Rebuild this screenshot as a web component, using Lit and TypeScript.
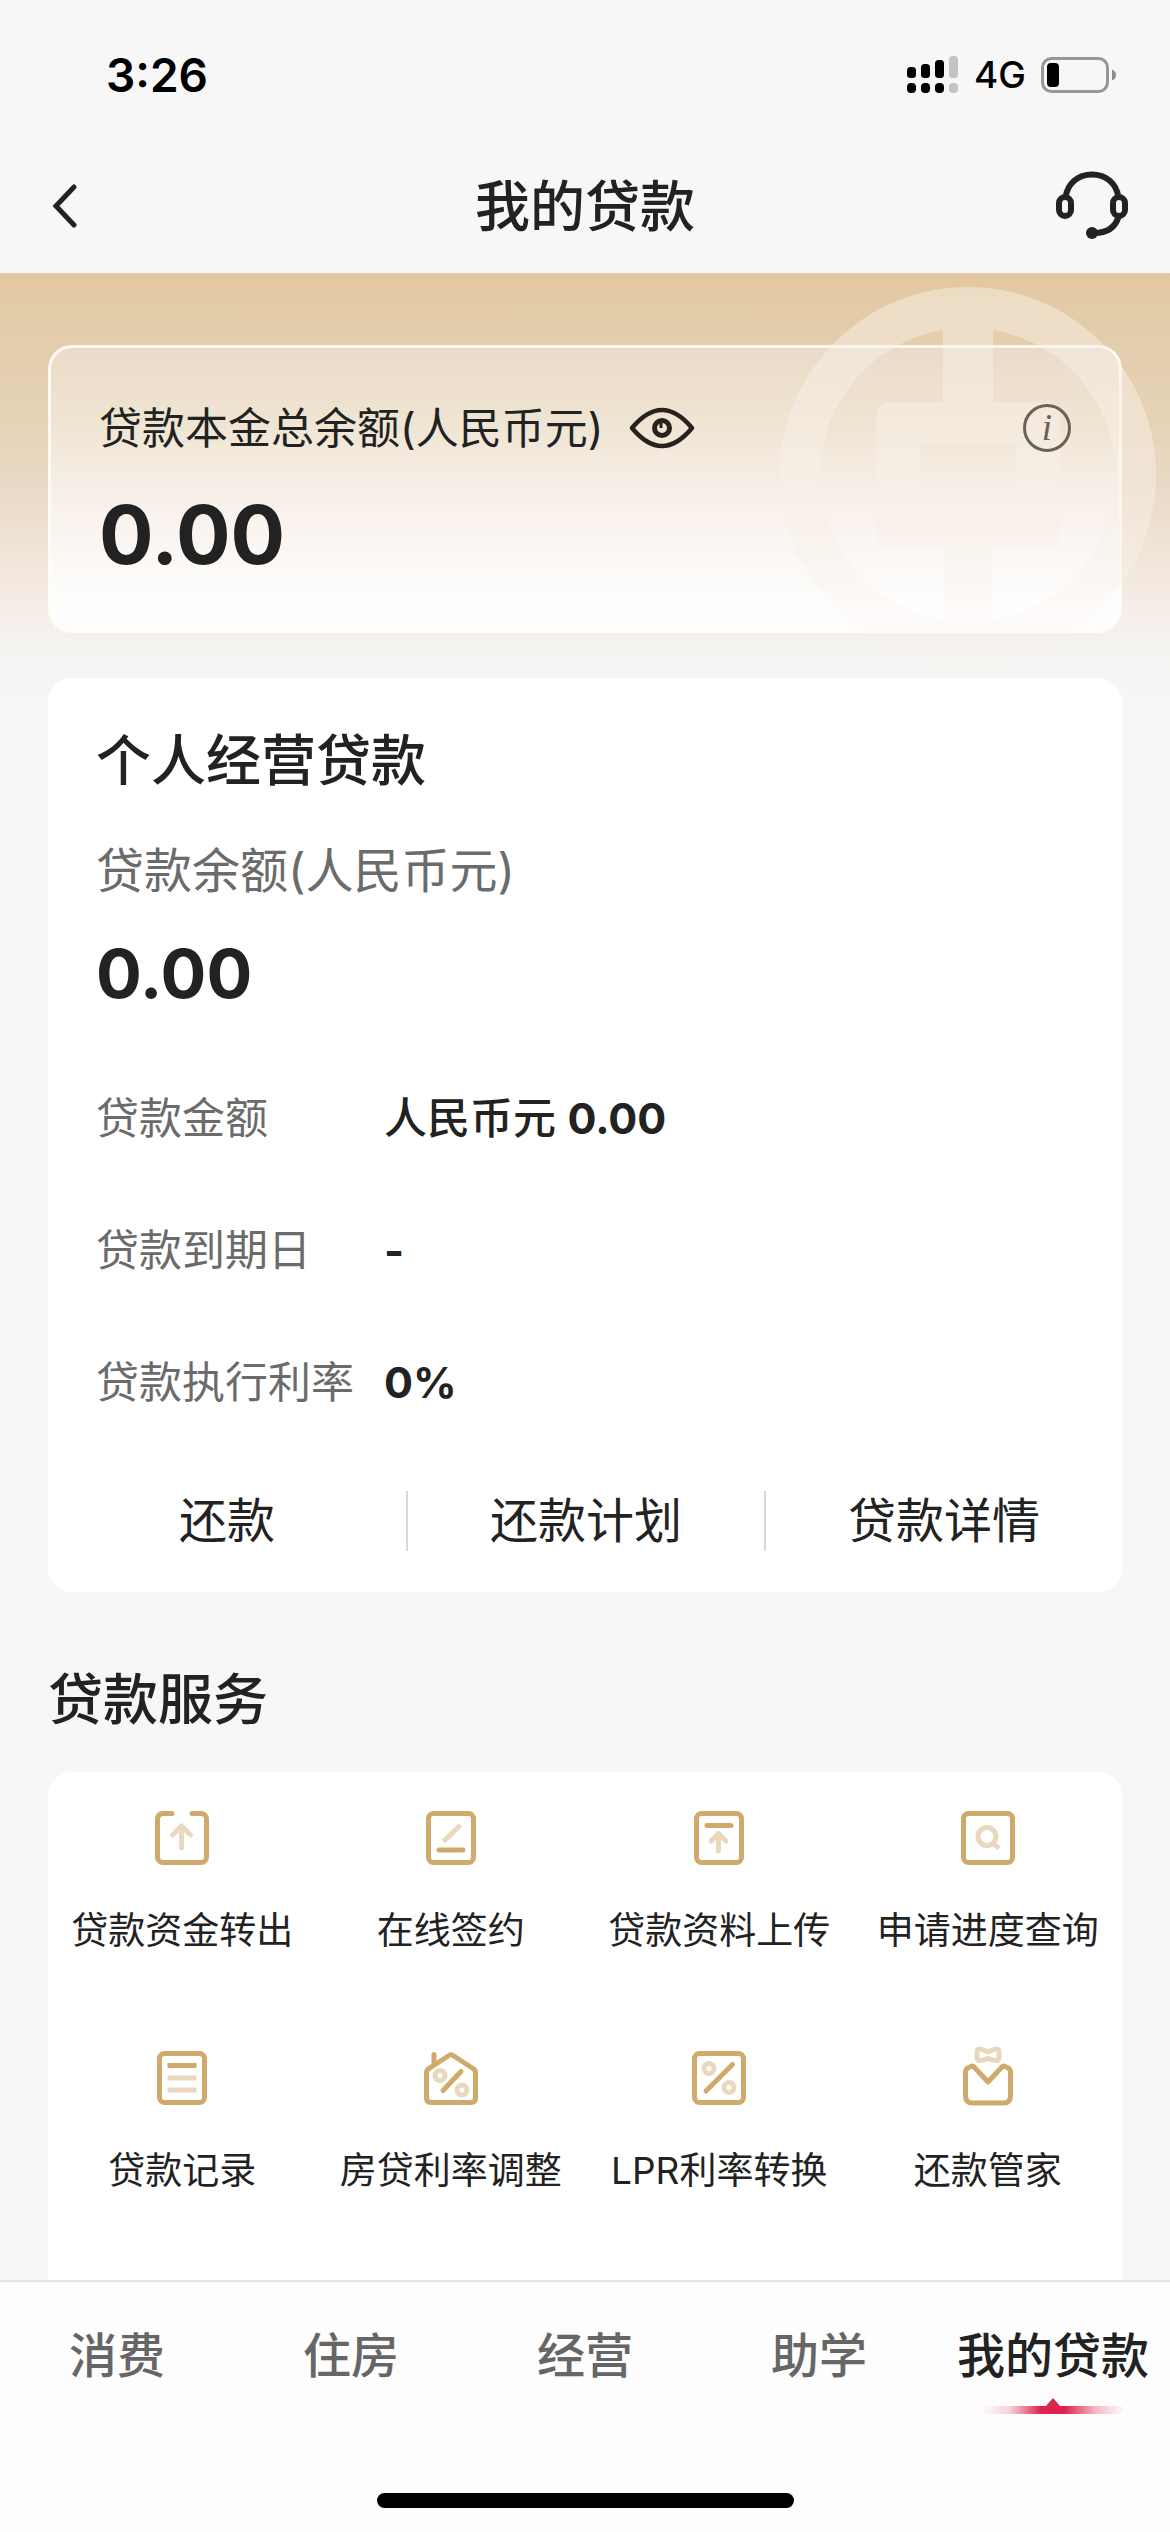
import { LitElement, html, css, svg, type TemplateResult } from "lit";
import { customElement, property, state } from "lit/decorators.js";
import { classMap } from "lit/directives/class-map.js";

const frame = (wide: boolean) =>
  wide
    ? svg`<rect class="dark" x="5.5" y="5.5" width="49" height="49" rx="5"/>`
    : svg`<rect class="dark" x="7.5" y="5.5" width="45" height="49" rx="5"/>`;

const glyphs: Record<string, TemplateResult> = {
  transfer: svg`
    <path class="dark" d="M20 5.5H11A5.5 5.5 0 0 0 5.5 11V49A5.5 5.5 0 0 0 11 54.5H49A5.5 5.5 0 0 0 54.5 49V11A5.5 5.5 0 0 0 49 5.5H40"/>
    <path class="light" d="M29.500 40V18M20.500 27L29.500 18L38.500 27"/>`,
  sign: svg`${frame(false)}
    <path class="dark" d="M18 42H42"/>
    <path class="light butt" d="M22.500 33.500L39.500 17"/>`,
  upload: svg`${frame(false)}
    <path class="dark" d="M18 17.500H42"/>
    <path class="light" d="M29.500 43V25.500M22 33L29.500 25.500L37 33"/>`,
  search: svg`${frame(true)}
    <circle class="light" cx="29" cy="28.500" r="9"/>
    <path class="light butt" d="M34 34L41 40.500"/>`,
  record: svg`${frame(false)}
    <path class="dark butt" d="M15.500 17.500H44.500"/>
    <path class="light butt" d="M15.500 30H44.500M15.500 42H44.500"/>`,
  house: svg`
    <path class="dark" d="M5.500 24.500Q5.500 22 8 20.500L28 7.500Q30 6 32 7.500L52 20.500Q54.500 22 54.500 24.500V50Q54.500 54.500 50 54.500H10Q5.500 54.500 5.500 50ZM13 16V6.500"/>
    <path class="dark" d="M40 23.500L22 42.500"/>
    <circle class="light" cx="19" cy="27.500" r="5"/>
    <circle class="light" cx="41" cy="42" r="5"/>`,
  percent: svg`${frame(true)}
    <path class="dark" d="M43.500 16.500L17 43"/>
    <circle class="light" cx="20" cy="20.500" r="5"/>
    <circle class="light" cx="40" cy="39.500" r="5"/>`,
  butler: svg`
    <path class="dark" d="M7.500 24Q7.500 21 10.500 19.500L13 18.500Q15 17.500 16.500 19.500L30 34L43.500 19.500Q45 17.500 47 18.500L49.500 19.500Q52.500 21 52.500 24V48Q52.500 55 45.500 55H14.500Q7.500 55 7.500 48Z"/>
    <path class="light" d="M30 4C26 2 23 0.500 20.500 1Q19 1.500 19 5V9Q19 12 21 12.500C23.500 13 26 12 30 10.500C34 12 36.500 13 39 12.500Q41 12 41 9V5Q41 1.500 39.500 1C37 0.500 34 2 30 4Z"/>`,
};

@customElement("service-item")
class ServiceItem extends LitElement {
  @property() label = "";
  @property() icon = "";

  static styles = css`
    :host { display: block; }
    .item {
      display: flex; flex-direction: column; align-items: center; gap: 39px;
      width: 100%; padding: 0; border: 0; background: none; color: #222;
      font: inherit; font-size: 37px; line-height: 48px; white-space: nowrap; cursor: pointer;
    }
    .icon { width: 60px; height: 60px; fill: none; overflow: visible; }
    .dark { stroke: #d0aa6c; stroke-width: 5; stroke-linecap: round; stroke-linejoin: round; }
    .light { stroke: #e9d8bd; stroke-width: 5; stroke-linecap: round; stroke-linejoin: round; }
    .butt { stroke-linecap: butt; }
  `;

  render() {
    return html`
      <button class="item" type="button">
        <svg class="icon" viewBox="0 0 60 60" aria-hidden="true">${glyphs[this.icon]}</svg>
        <span>${this.label}</span>
      </button>`;
  }
}

const details = [
  { name: "贷款金额", value: "人民币元 0.00" },
  { name: "贷款到期日", value: "-" },
  { name: "贷款执行利率", value: "0%" },
];

const actions = ["还款", "还款计划", "贷款详情"];

const services = [
  { label: "贷款资金转出", icon: "transfer" },
  { label: "在线签约", icon: "sign" },
  { label: "贷款资料上传", icon: "upload" },
  { label: "申请进度查询", icon: "search" },
  { label: "贷款记录", icon: "record" },
  { label: "房贷利率调整", icon: "house" },
  { label: "LPR利率转换", icon: "percent" },
  { label: "还款管家", icon: "butler" },
];

const tabs = ["消费", "住房", "经营", "助学", "我的贷款"];

@customElement("app-root")
class AppRoot extends LitElement {
  @state() private concealed = false;
  @state() private tab = "我的贷款";

  static styles = css`
    :host {
      display: flex; flex-direction: column; min-height: 100vh;
      background: #f7f7f7; color: #222;
      font-family: Inter, "Noto Sans CJK SC", sans-serif;
    }
    * { box-sizing: border-box; }
    button { padding: 0; border: 0; background: none; color: inherit; font: inherit; cursor: pointer; }
    h1, h2, p, dl, dd { margin: 0; }
    svg { display: block; }

    .status {
      display: flex; align-items: center; justify-content: space-between;
      height: 138px; padding: 12px 53px 0 106px; color: #000;
    }
    .time { font-size: 46px; line-height: 56px; font-weight: 600; }
    .signals { display: flex; align-items: center; gap: 15px; }
    .network { font-size: 37px; line-height: 48px; font-weight: 500; }

    .titlebar {
      display: grid; grid-template-columns: 72px 1fr 72px; align-items: center;
      height: 135px; padding: 0 42px;
    }
    .back { display: flex; align-items: center; height: 72px; padding-left: 10px; }
    .title { font-size: 55px; line-height: 72px; font-weight: 500; text-align: center; }

    .content {
      position: relative; flex: 1; display: flex; flex-direction: column;
      padding: 72px 48px 0;
      background: linear-gradient(#e2c8a0, #e3ceae 80px, #e5d3b4 140px, #ead9c6 215px, #f0e5d8 280px, #f5ece6 330px, #f5f3f0 370px, #f7f7f7 440px) 0 0 / 100% 440px no-repeat;
    }
    .watermark { position: absolute; top: 14px; right: 14px; width: 376px; height: 376px; pointer-events: none; }

    .total {
      position: relative; display: flex; flex-direction: column; gap: 35px;
      padding: 52px 48px 51px; border: 3px solid rgba(255, 253, 245, 0.9); border-radius: 24px;
      background: linear-gradient(rgba(240, 230, 222, 0.55), rgba(246, 240, 230, 0.6) 80px, rgba(251, 245, 242, 0.8) 160px, rgba(253, 252, 251, 0.86) 220px, rgba(255, 255, 255, 0.94) 260px);
      background-origin: border-box;
    }
    .total-head { position: relative; z-index: 1; display: flex; align-items: center; gap: 26px; }
    .total-label { font-size: 43px; line-height: 56px; }
    .info {
      display: flex; align-items: center; justify-content: center;
      width: 48px; height: 48px; margin-left: auto;
      border: 3px solid #6b6057; border-radius: 50%; color: #6b6057;
      font-family: "Liberation Serif", serif; font-style: italic; font-size: 37px; line-height: 40px;
    }
    .total-value { font-size: 81px; line-height: 88px; font-weight: 700; }

    .loan { position: relative; z-index: 1; margin-top: 45px; border-radius: 24px; background: #fff; padding: 46px 0 41px; }
    .loan-body { padding: 0 48px; }
    .heading { font-size: 55px; line-height: 72px; font-weight: 500; }
    .loan-label { margin-top: 43px; font-size: 48px; line-height: 64px; color: #6b6b6b; }
    .loan-value { margin-top: 30px; font-size: 68px; line-height: 80px; font-weight: 700; }
    .details {
      display: grid; grid-template-columns: max-content 1fr; gap: 76px 30px;
      margin-top: 77px; font-size: 43px; line-height: 56px;
    }
    .details dt { color: #6b6b6b; }
    .details dd { font-weight: 700; }
    .details .cjk { font-weight: 500; }
    .actions { display: grid; grid-template-columns: repeat(3, 1fr); margin-top: 81px; }
    .action { height: 60px; font-size: 48px; line-height: 60px; }
    .action + .action { border-left: 2px solid #d8d8d8; }

    .services-title { margin-top: 71px; }
    .services {
      flex: 1; display: grid; grid-template-columns: repeat(4, 1fr); align-content: start; row-gap: 93px;
      margin-top: 37px; padding: 36px 0 80px; border-radius: 24px 24px 0 0; background: #fff;
    }

    .tabbar { border-top: 2px solid #e6e6e6; background: #fdfdfd; padding-bottom: 24px; }
    .tabs { display: grid; grid-template-columns: repeat(5, 1fr); padding-top: 42px; }
    .tab {
      display: flex; flex-direction: column; align-items: center; gap: 10px; height: 90px;
      font-size: 48px; line-height: 64px; font-weight: 500; color: #666; white-space: nowrap;
    }
    .tab.active { color: #222; }
    .home { width: 36%; max-width: 417px; height: 15px; margin: 79px auto 0; border-radius: 8px; background: #000; }
  `;

  private renderStatus() {
    return html`
      <div class="status">
        <span class="time">3:26</span>
        <div class="signals">
          <svg width="52" height="38" viewBox="0 0 52 38" aria-hidden="true">
            <rect x="0" y="11" width="9" height="11" rx="3.500"/>
            <rect x="14" y="8" width="9" height="14" rx="3.500"/>
            <rect x="28" y="4" width="9" height="18" rx="3.500"/>
            <rect x="42" y="0" width="9" height="22" rx="3.500" fill="#c4c4c4"/>
            <rect x="0" y="27" width="9" height="10" rx="4"/>
            <rect x="14" y="27" width="9" height="10" rx="4"/>
            <rect x="28" y="27" width="9" height="10" rx="4"/>
            <rect x="42" y="27" width="9" height="10" rx="4" fill="#c4c4c4"/>
          </svg>
          <span class="network">4G</span>
          <svg width="76" height="36" viewBox="0 0 76 36" aria-hidden="true">
            <rect x="1.500" y="1.500" width="65" height="33" rx="9" fill="none" stroke="#979797" stroke-width="3"/>
            <rect x="6" y="6" width="12" height="24" rx="4"/>
            <path d="M71 12.500Q75 14 75 18Q75 22 71 23.500Z" fill="#8c8c8c"/>
          </svg>
        </div>
      </div>`;
  }

  private renderWatermark() {
    return html`
      <svg class="watermark" viewBox="0 0 376 376" aria-hidden="true">
        <defs>
          <linearGradient id="fade" x1="0" y1="0" x2="0" y2="376" gradientUnits="userSpaceOnUse">
            <stop offset="0" stop-color="#f8efe6" stop-opacity="0.5"/>
            <stop offset="0.700" stop-color="#f8f0e9" stop-opacity="0.5"/>
            <stop offset="1" stop-color="#f7f2ee" stop-opacity="0.1"/>
          </linearGradient>
        </defs>
        <path fill="url(#fade)" fill-rule="evenodd" d="M188 0A188 188 0 1 1 188 376A188 188 0 1 1 188 0Z
          M163 43A147 147 0 0 0 163 333V261H112Q96 261 96 245V131Q96 115 112 115H163Z
          M213 43A147 147 0 0 1 213 333V261H264Q280 261 280 245V131Q280 115 264 115H213Z
          M144 155H232Q236 155 236 159V217Q236 221 232 221H144Q140 221 140 217V159Q140 155 144 155Z"/>
      </svg>`;
  }

  private renderTotal() {
    return html`
      <section class="total">
        <div class="total-head">
          <span class="total-label">贷款本金总余额(人民币元)</span>
          <button type="button" aria-label="显示或隐藏余额" @click=${() => (this.concealed = !this.concealed)}>
            <svg width="66" height="42" viewBox="0 0 66 42" fill="none" stroke="#26231f" aria-hidden="true">
              <path stroke-width="4.500" stroke-linejoin="round" d="M3 21C13 9 23 3 33 3S53 9 63 21C53 33 43 39 33 39S13 33 3 21Z"/>
              <circle cx="33" cy="21" r="7.500" stroke-width="5"/>
              <path stroke-width="3" d="M32 15V21"/>
            </svg>
          </button>
          <button class="info" type="button" aria-label="说明">i</button>
        </div>
        <p class="total-value">${this.concealed ? "****" : "0.00"}</p>
      </section>`;
  }

  private renderValue(value: string) {
    const [first, second] = value.split(" ");
    return second ? html`<span class="cjk">${first} </span>${second}` : value;
  }

  render() {
    return html`
      ${this.renderStatus()}
      <header class="titlebar">
        <button class="back" type="button" aria-label="返回">
          <svg width="26" height="44" viewBox="0 0 26 44" fill="none" stroke="#222" stroke-width="5" stroke-linecap="round" aria-hidden="true">
            <path d="M22 3L4 22L22 41"/>
          </svg>
        </button>
        <h1 class="title">我的贷款</h1>
        <button type="button" aria-label="客服">
          <svg width="72" height="69" viewBox="0 0 72 69" fill="none" stroke="#222" stroke-width="6" aria-hidden="true">
            <path d="M9.500 26C12 12 22 3.500 36 3.500S60 12 62.500 26"/>
            <rect x="3" y="26" width="12" height="19" rx="6"/>
            <rect x="57" y="26" width="12" height="19" rx="6"/>
            <path d="M62.500 46C59 57 51 62 38 62"/>
            <circle cx="36" cy="62" r="6" fill="#222" stroke="none"/>
          </svg>
        </button>
      </header>
      <main class="content">
        ${this.renderTotal()}
        ${this.renderWatermark()}
        <section class="loan">
          <div class="loan-body">
            <h2 class="heading">个人经营贷款</h2>
            <p class="loan-label">贷款余额(人民币元)</p>
            <p class="loan-value">0.00</p>
            <dl class="details">
              ${details.map((d) => html`<dt>${d.name}</dt><dd>${this.renderValue(d.value)}</dd>`)}
            </dl>
          </div>
          <div class="actions">
            ${actions.map((a) => html`<button class="action" type="button">${a}</button>`)}
          </div>
        </section>
        <h2 class="heading services-title">贷款服务</h2>
        <section class="services">
          ${services.map((s) => html`<service-item .label=${s.label} .icon=${s.icon}></service-item>`)}
        </section>
      </main>
      <footer class="tabbar">
        <nav class="tabs">
          ${tabs.map((t) => html`
            <button type="button" class=${classMap({ tab: true, active: t === this.tab })} @click=${() => (this.tab = t)}>
              <span>${t}</span>
              ${t === this.tab
                ? html`<svg width="144" height="16" viewBox="0 0 144 16" aria-hidden="true">
                    <defs>
                      <linearGradient id="glow">
                        <stop offset="0" stop-color="#e0234e" stop-opacity="0"/>
                        <stop offset="0.200" stop-color="#e0234e" stop-opacity="0.200"/>
                        <stop offset="0.420" stop-color="#e0234e"/>
                        <stop offset="0.580" stop-color="#e0234e"/>
                        <stop offset="0.800" stop-color="#e0234e" stop-opacity="0.300"/>
                        <stop offset="1" stop-color="#e0234e" stop-opacity="0"/>
                      </linearGradient>
                    </defs>
                    <rect y="8" width="144" height="8" rx="4" fill="url(#glow)"/>
                    <path d="M72 0L80 9H64Z" fill="#d62c4a"/>
                  </svg>`
                : ""}
            </button>`)}
        </nav>
        <div class="home"></div>
      </footer>`;
  }
}
